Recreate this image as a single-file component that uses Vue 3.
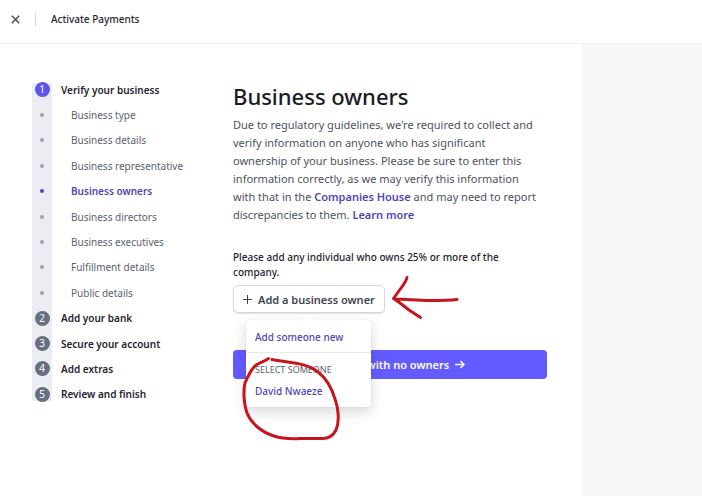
<script setup>
import { ref } from "vue";

const steps = [
    { number: 1, title: "Verify your business", current: true },
    { title: "Business type" },
    { title: "Business details" },
    { title: "Business representative" },
    { title: "Business owners", current: true },
    { title: "Business directors" },
    { title: "Business executives" },
    { title: "Fulfillment details" },
    { title: "Public details" },
    { number: 2, title: "Add your bank" },
    { number: 3, title: "Secure your account" },
    { number: 4, title: "Add extras" },
    { number: 5, title: "Review and finish" },
];

const people = ["David Nwaeze"];
const menuOpen = ref(true);
</script>

<template>
    <div class="page">
        <header class="topbar">
            <button class="close" type="button" aria-label="Close">
                <svg width="9" height="9" viewBox="0 0 9 9">
                    <path d="M0.8 0.8L8.2 8.2M8.2 0.8L0.8 8.2" />
                </svg>
            </button>
            <span class="topbar-title">Activate Payments</span>
        </header>
        <div class="body">
            <nav class="sidebar">
                <ol class="steps">
                    <li
                        v-for="step in steps"
                        :key="step.title"
                        :class="['step', step.number ? 'main' : 'sub', { current: step.current }]"
                    >
                        <span class="marker">
                            <span v-if="step.number" class="number">{{ step.number }}</span>
                            <span v-else class="dot"></span>
                        </span>
                        <span class="step-title">{{ step.title }}</span>
                    </li>
                </ol>
            </nav>
            <main class="content">
                <h1>Business owners</h1>
                <p class="intro">
                    Due to regulatory guidelines, we're required to collect and verify information on
                    anyone who has significant ownership of your business. Please be sure to enter this
                    information correctly, as we may verify this information with that in the
                    <a href="#">Companies House</a> and may need to report discrepancies to them.
                    <a href="#">Learn more</a>
                </p>
                <p class="hint">Please add any individual who owns 25% or more of the company.</p>
                <div class="picker">
                    <button class="add" type="button" @click="menuOpen = !menuOpen">
                        <svg width="9" height="9" viewBox="0 0 9 9">
                            <path d="M4.5 0V9M0 4.5H9" />
                        </svg>
                        Add a business owner
                    </button>
                    <div v-if="menuOpen" class="menu">
                        <button class="menu-item new" type="button">Add someone new</button>
                        <div class="menu-group">
                            <div class="menu-label">SELECT SOMEONE</div>
                            <button v-for="name in people" :key="name" class="menu-item" type="button">
                                {{ name }}
                            </button>
                        </div>
                    </div>
                    <svg class="drawing" width="240" height="170" viewBox="0 0 240 170">
                        <path
                            d="M174 -7.5C173 -3 169 2 165.5 6.5L160.5 13.500L167 18L176 25L187.5 32.5M161 14C175 14 182 15.500 197 15.500C208 15.500 215 15.500 224 14.500"
                        />
                        <path
                            d="M35.5 73.5C33 76 28 77 23 80C18 84 15 91 12 98C10 106 11 120 14 128C18 138 28 147 41 151C50 154 58 154 67 153.500H88C95 154 100 151 103 145C107 136 105 122 102 114C99 104 93 93 85 87C74 78 59 78 39 74.5"
                        />
                    </svg>
                </div>
                <button class="submit" type="button">
                    Continue with no owners
                    <svg width="10" height="9" viewBox="0 0 10 9">
                        <path d="M0 4.5H9M5.5 1L9 4.5L5.5 8" />
                    </svg>
                </button>
            </main>
            <aside class="side"></aside>
        </div>
    </div>
</template>

<style>
body {
    background: #fff;
}
</style>

<style scoped>
.page {
    min-height: 100vh;
    display: flex;
    flex-direction: column;
    font-family: "Noto Sans", "Open Sans", sans-serif;
    font-size: 10px;
    color: #1f2430;
}

button {
    font: inherit;
    border: 0;
    padding: 0;
    background: none;
    cursor: pointer;
}

svg {
    fill: none;
    stroke: currentColor;
}

h1,
p,
ol {
    margin: 0;
    padding: 0;
}

a {
    color: #5046ba;
    font-weight: 600;
    text-decoration: none;
}

.topbar {
    box-sizing: border-box;
    height: 44px;
    padding: 0 11px 4px;
    display: flex;
    align-items: center;
    border-bottom: 1px solid #f0f1f3;
}

.close {
    display: flex;
    color: #3c4048;
}

.close svg {
    stroke-width: 1.3;
}

.topbar-title {
    margin-left: 15px;
    padding-left: 15px;
    line-height: 13px;
    border-left: 1px solid #d5d8dd;
    font-weight: 500;
}

.body {
    flex: 1;
    display: flex;
}

.sidebar {
    flex: 0 0 201px;
    padding: 33px 0 0 32px;
}

.steps {
    height: 330px;
    display: flex;
    flex-direction: column;
    justify-content: space-between;
    list-style: none;
    background: linear-gradient(#ebedf2, #ebedf2) 0 6px / 20px 318px no-repeat;
}

.step {
    display: flex;
    align-items: center;
    height: 25px;
}

.marker {
    width: 20px;
    display: flex;
    justify-content: center;
}

.number {
    width: 15px;
    height: 15px;
    border-radius: 50%;
    background: #667080;
    color: #fff;
    line-height: 15px;
    text-align: center;
}

.dot {
    width: 4px;
    height: 4px;
    border-radius: 50%;
    background: #9da2aa;
}

.step-title {
    padding-left: 9px;
}

.main .step-title {
    font-weight: 600;
}

.sub .step-title {
    padding-left: 19px;
    color: #596170;
}

.current .number {
    background: #5f55ed;
}

.current .dot {
    background: #5046ba;
}

.sub.current .step-title {
    color: #5046ba;
    font-weight: 600;
}

.content {
    flex: 1;
    max-width: 314px;
    padding: 36px 35px 40px 0;
}

h1 {
    font-size: 22px;
    line-height: 32px;
    font-weight: 500;
    color: #1a1b25;
}

.intro {
    padding: 4px 8px 0 0;
    font-size: 11px;
    line-height: 18px;
    color: #4c525e;
}

.hint {
    padding: 26px 20px 5px 0;
    line-height: 15px;
    font-weight: 500;
}

.picker {
    position: relative;
}

.add {
    box-sizing: border-box;
    height: 28px;
    padding: 0 9px;
    display: flex;
    align-items: center;
    gap: 6px;
    border: 1px solid #d5d8e0;
    border-radius: 5px;
    box-shadow: 0 1px 1px rgba(40, 44, 60, 0.15);
    font-size: 11px;
    font-weight: 600;
    color: #414552;
}

.menu {
    position: absolute;
    z-index: 1;
    top: 35px;
    left: 13px;
    width: 125px;
    border-radius: 3px;
    background: #fff;
    box-shadow: 0 5px 14px rgba(50, 55, 80, 0.2), 0 0 1px rgba(50, 55, 80, 0.2);
}

.menu::before {
    content: "";
    position: absolute;
    top: -3px;
    left: 58px;
    width: 8px;
    height: 8px;
    background: #fff;
    transform: rotate(45deg);
}

.menu-item {
    display: block;
    width: 100%;
    padding: 0 9px;
    line-height: 22px;
    text-align: left;
    font-weight: 500;
    color: #5046ba;
}

.new {
    padding-top: 6px;
    padding-bottom: 4px;
}

.menu-group {
    padding: 8px 0 5px;
    border-top: 1px solid #e8eaee;
}

.menu-label {
    padding: 0 9px 2px;
    font-size: 9px;
    line-height: 17px;
    color: #596170;
}

.drawing {
    position: absolute;
    z-index: 2;
    top: 0;
    left: 0;
    overflow: visible;
    pointer-events: none;
    stroke: #c4161c;
    stroke-width: 3;
    stroke-linecap: round;
    stroke-linejoin: round;
}

.submit {
    width: 100%;
    height: 29px;
    margin-top: 37px;
    display: flex;
    align-items: center;
    justify-content: center;
    gap: 6px;
    border-radius: 4px;
    background: #635bff;
    color: #fff;
    font-size: 11px;
    font-weight: 600;
}

.submit svg {
    stroke-width: 1.5;
}

.side {
    flex: 0 0 120px;
    margin-left: auto;
    background: #f6f8fa;
}
</style>
